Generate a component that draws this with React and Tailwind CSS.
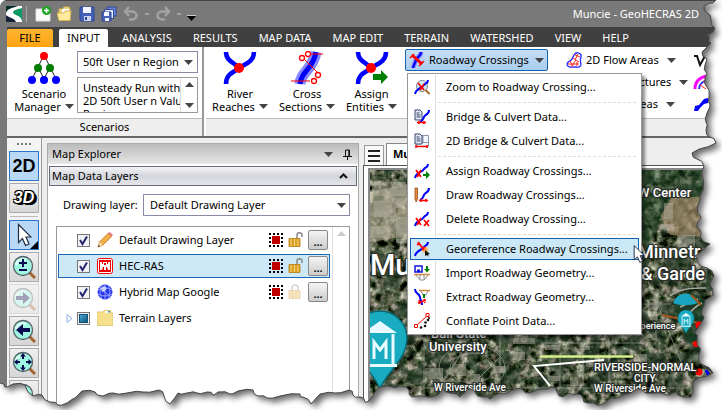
import React, { useState } from 'react'

const tabs = ['ANALYSIS', 'RESULTS', 'MAP DATA', 'MAP EDIT', 'TERRAIN', 'WATERSHED', 'VIEW', 'HELP']

const Caret = ({ className = '' }) => (
  <svg className={`shrink-0 ${className}`} width="9" height="5" viewBox="0 0 9 5">
    <path d="M0 0h9L4.500 5z" fill="#444" />
  </svg>
)

const Icon = ({ children, size = 16, className = '' }) => (
  <svg className={`shrink-0 ${className}`} width={size} height={size} viewBox="0 0 16 16" fill="none">
    {children}
  </svg>
)

/* ---------- quick access icons ---------- */

const Logo = () => (
  <svg width="16" height="16" viewBox="0 0 16 16">
    <rect width="16" height="16" fill="#fff" />
    <path d="M0 0h12C6 2 1 3 0 7z" fill="#08302f" />
    <path d="M16 2v13c-1-6-9-6-9-8.500C7 4 12 3 16 2z" fill="#0b9a62" />
    <path d="M0 9c2 2.500 9 3 10 7H0z" fill="#1a2438" />
  </svg>
)

const NewIcon = () => (
  <Icon>
    <path d="M1 3h10l4 4v8H1z" fill="#fafafa" stroke="#ddd" />
    <circle cx="11.500" cy="4.500" r="4.500" fill="#1fa51f" />
    <path d="M11.500 2v5M9 4.500h5" stroke="#fff" strokeWidth="1.500" />
  </Icon>
)

const OpenIcon = () => (
  <Icon>
    <path d="M2 14V3h4l1-2h5l1 2v11z" fill="#f0d480" stroke="#d9b54c" />
    <path d="M5 3h7v4H5z" fill="#fff" />
    <path d="M0 7h7l1-2h6l-1 9.500H2z" fill="#ffeaa0" stroke="#dbb550" />
  </Icon>
)

const SaveIcon = () => (
  <Icon>
    <path d="M1 1h14v14H2l-1-1z" fill="#4560b8" stroke="#2e4795" />
    <path d="M4 1h8v6H4z" fill="#f4f6ff" />
    <path d="M5 10h7v5H5z" fill="#cfd8f0" />
    <path d="M6 11h2v3H6z" fill="#2e4795" />
  </Icon>
)

const SaveAllIcon = () => (
  <Icon>
    <path d="M6 1h9v9H6z" fill="#6a86d8" stroke="#2e4795" />
    <path d="M3.500 3.500h9v9h-9z" fill="#e4eaff" stroke="#2e4795" />
    <path d="M1 6h9v9H1z" fill="#4560b8" stroke="#2e4795" />
    <path d="M3 6h5v4H3zM4 12h4v3H4z" fill="#f4f6ff" />
  </Icon>
)

const UndoIcon = ({ flip }) => (
  <Icon className={flip ? '-scale-x-100' : ''}>
    <path d="M6 1L2 5.500l4 4.500M2.500 5.500H9c6 0 6 8 0 8H6" stroke="#a3a3a3" strokeWidth="2.400" />
  </Icon>
)

/* ---------- ribbon icons ---------- */

const ScenarioIcon = () => (
  <svg width="34" height="34" viewBox="0 0 34 34">
    <path d="M17 4L5 28M17 4l12 24M11 16l6 12 6-12" stroke="#222" fill="none" />
    <circle cx="17" cy="5" r="4" fill="#f00" />
    <circle cx="11" cy="17" r="4" fill="#007d00" />
    <circle cx="23" cy="17" r="4" fill="#007d00" />
    <circle cx="5" cy="29" r="4" fill="#00f" />
    <circle cx="17" cy="29" r="4" fill="#00f" />
    <circle cx="29" cy="29" r="4" fill="#00f" />
  </svg>
)

const RiverIcon = ({ assign }) => (
  <svg width="34" height="34" viewBox="0 0 34 34" fill="none">
    <path d="M3 1c0 10 10 11 13 16C12 21 3 22 3 33M31 1c0 10-9 12-15 16" stroke="#00f" strokeWidth="4.500" />
    <circle cx="16" cy="17" r="5" fill="#f00" />
    {assign && <path d="M18 23h8v-4l7 7-7 7v-4h-8z" fill="#008000" />}
  </svg>
)

const SectionsIcon = () => (
  <svg width="34" height="34" viewBox="0 0 34 34" fill="none">
    <path d="M10 33c1-13 13-14 16-32" stroke="#88f" strokeWidth="11" />
    <path d="M10 33c1-13 13-14 16-32" stroke="#00f" strokeWidth="5" />
    <path d="M1 30h19M20 3h13M14 8l15 15" stroke="#f00" />
    <g fill="#fff" stroke="#f00" strokeWidth="1.300">
      <circle cx="12" cy="7" r="2.500" />
      <circle cx="18" cy="3" r="2.500" />
      <circle cx="28" cy="24" r="2.500" />
      <circle cx="24" cy="30" r="2.500" />
    </g>
  </svg>
)

const CrossingIcon = () => (
  <Icon>
    <path d="M12 0c0 5-4 4-5 8-1 3-2 4-3 8" stroke="#99f" strokeWidth="5" />
    <path d="M12 0c0 5-4 4-5 8-1 3-2 4-3 8" stroke="#00f" strokeWidth="2.500" />
    <path d="M3 3l10 9" stroke="#f00" strokeWidth="3" />
    <path d="M1 6l4-4M10 14l5-5" stroke="#f00" strokeWidth="1.500" />
  </Icon>
)

const FlowIcon = () => (
  <Icon>
    <path d="M8 3c2-4 8-2 7 2-1 3-1 4 0 7 0 4-4 3-6 3-3 0-8 1-8-3 0-3 4-2 5-5z" fill="#fff" stroke="#22f" strokeWidth="1.300" />
    <path d="M4 9l3 5M7 6l6 4M9 3l5 2M10 8l-5 7M12 2l-3 6M2 12h11M11 10v4" stroke="#f22" />
  </Icon>
)

const StructureIcon = () => (
  <Icon>
    <path d="M2 15C2 7 7 3 15 2" stroke="#f0f" strokeWidth="3" />
    <path d="M6 15c0-5 4-8 10-9" stroke="#33f" strokeWidth="2" />
    <path d="M7 11l6 4M10 7l5 4" stroke="#f22" />
  </Icon>
)

const StorageIcon = () => (
  <Icon>
    <path d="M2 10l4-1 5-6 4-1v5l-4 1-4 4-2 3H1z" fill="#00f" />
  </Icon>
)

/* ---------- crossing menu icons ---------- */

const River = ({ d = 'M1 15c1-6 8-6 9-9 1-2 4-1 4-5' }) => <path d={d} stroke="#00f" strokeWidth="2" />
const RedCross = ({ d = 'M2 8l6 7M8 8l-6 7' }) => <path d={d} stroke="#f00" strokeWidth="1.800" />
const Bars = () => (
  <>
    <path d="M1 1h5l2 2v8H1z" fill="#e8ecf6" stroke="#35446e" />
    <path d="M2.500 4h3M2.500 6h4M2.500 8h4" stroke="#35446e" />
  </>
)

const menu = [
  {
    label: 'Zoom to Roadway Crossing...',
    icon: (
      <>
        <circle cx="8" cy="7" r="5.500" fill="#c7f1ed" stroke="#889" />
        <path d="M11.500 11l4 4" stroke="#a86a2b" strokeWidth="2" />
        <River />
        <RedCross d="M4 4l6 7M10 5l-4 6" />
      </>
    )
  },
  {
    label: 'Bridge & Culvert Data...',
    gap: true,
    icon: (
      <>
        <Bars />
        <River d="M15 1c0 5-4 4-5 7-1 2-1 4-4 5" />
        <path d="M3 13.500h9M5 12v3M10 12v3" stroke="#f00" strokeWidth="1.500" />
      </>
    )
  },
  {
    label: '2D Bridge & Culvert Data...',
    icon: (
      <>
        <path d="M3 2.500h11.500v11H3zM9 2v8M3 9.500h11" fill="#f5f8fc" stroke="#8593a8" />
        <Bars />
        <path d="M2 13.500h12M2 12v3M13 12v3" stroke="#f00" strokeWidth="1.500" />
      </>
    )
  },
  {
    label: 'Assign Roadway Crossings...',
    gap: true,
    icon: (
      <>
        <River />
        <RedCross d="M2 7l5 7M7 7l-4 7" />
        <path d="M9 11h3V8l4 4-4 4v-3H9z" fill="#008000" />
      </>
    )
  },
  {
    label: 'Draw Roadway Crossings...',
    icon: (
      <>
        <path d="M1 1h2.500v11L2.200 15 1 12z" fill="#e58a3b" stroke="#9a4d16" strokeWidth=".8" />
        <River d="M15 1c0 5-4 4-5 7-1 2-1 4-4 5" />
        <path d="M5 13.500h9M7 12v3M12 12v3" stroke="#f00" strokeWidth="1.500" />
      </>
    )
  },
  {
    label: 'Delete Roadway Crossing...',
    icon: (
      <>
        <River />
        <RedCross d="M2 7l5 7M7 7l-4 7" />
        <RedCross d="M10 9l5 6M15 9l-5 6" />
      </>
    )
  },
  {
    label: 'Georeference Roadway Crossings...',
    gap: true,
    active: true,
    icon: (
      <>
        <River />
        <circle cx="11" cy="9" r="3" fill="#ffad5c" />
        <RedCross d="M4 1l6 8M3 4l3-2M8 8l3-2" />
        <path d="M11 9l5 4-2 .5L15 16l-2-2-2 1z" fill="#111" />
      </>
    )
  },
  {
    label: 'Import Roadway Geometry...',
    icon: (
      <>
        <path d="M1 1h7v6H1z" fill="#fff" stroke="#11d" strokeWidth="1.500" />
        <path d="M3 4.500h3V7H3z" fill="#11d" />
        <path d="M12 1h2v3h2l-3 3.500L10 4h2z" fill="#008000" />
        <path d="M0 9.500h16" stroke="#d08a3d" strokeWidth="1.500" />
        <path d="M2 10l4 5h4l4-5M6 10v4M10 10v4" stroke="#888" />
      </>
    )
  },
  {
    label: 'Extract Roadway Geometry...',
    icon: (
      <>
        <path d="M5 1.500h11" stroke="#d08a3d" strokeWidth="1.500" />
        <path d="M7 2l2 4h3l2-4" stroke="#888" />
        <River d="M1 0c0 5 4 4 5 8 0 3 2 4 2 8" />
        <path d="M10 5v4" stroke="#008000" strokeWidth="2" />
        <path d="M4 14l8-3M5 11l1 4M10 10l1 4" stroke="#f00" strokeWidth="1.500" />
      </>
    )
  },
  {
    label: 'Conflate Point Data...',
    icon: (
      <>
        <path d="M2 13L14 2" stroke="#f00" />
        <path d="M.5 11.500h3v3h-3zM12 .5h3v3h-3z" fill="#fff" stroke="#f00" />
        <g fill="#111">
          <circle cx="7" cy="14.500" r="1.300" />
          <circle cx="11" cy="13" r="1.300" />
          <circle cx="11.500" cy="9.500" r="1.300" />
          <circle cx="14" cy="7" r="1.300" />
          <circle cx="15" cy="5" r="1" />
        </g>
      </>
    )
  }
]

/* ---------- side toolbar ---------- */

const Magnifier = ({ children }) => (
  <svg width="24" height="24" viewBox="0 0 24 24" fill="none">
    <path d="M17 17l6 6" stroke="#a5622b" strokeWidth="3" />
    <circle cx="11" cy="11" r="9.500" fill="#9ff7e2" stroke="#555f66" strokeWidth="1.300" />
    <path d="M4 10a7 7 0 0110-5" stroke="#dffff8" strokeWidth="2" />
    {children}
  </svg>
)

const Pointer = ({ className = '' }) => (
  <svg className={className} width="15" height="24" viewBox="0 0 15 24">
    <path d="M1.500 1.500v18l4-4 3 7 3.500-1.500-3-7h5z" fill="#fff" stroke="#1f2a44" strokeWidth="1.200" />
  </svg>
)

const tools = [
  { name: '2D view', active: true, art: <span className="font-['Liberation_Sans'] text-lg font-bold">2D</span> },
  {
    name: '3D view',
    art: (
      <span className="font-['Liberation_Sans'] text-base font-bold italic text-white [text-shadow:-1px_-1px_0_#000,1px_-1px_0_#000,-1px_1px_0_#000,1px_1px_0_#000,2px_2px_0_#000,3px_2px_0_#000]">3D</span>
    )
  },
  { name: 'Select', active: true, divider: true, corner: true, art: <Pointer /> },
  { name: 'Zoom in or out', art: <Magnifier><path d="M11 4v8M7 8h8M7 15h8" stroke="#0a0a50" strokeWidth="2" /></Magnifier> },
  { name: 'Next view', disabled: true, art: <Magnifier><path d="M4 9h7V5l7 6-7 6v-4H4z" fill="#0a0a50" /></Magnifier> },
  { name: 'Previous view', art: <Magnifier><path d="M18 9h-7V5l-7 6 7 6v-4h7z" fill="#0a0a50" /></Magnifier> },
  {
    name: 'Zoom extents',
    art: (
      <Magnifier>
        <path d="M11 2l3 3.500H8zM11 20l3-3.500H8zM2 11l3.500-3v6zM20 11l-3.500-3v6z" fill="#0a0a50" />
        <path d="M11 4v4M11 14v4M4 11h4M14 11h4" stroke="#0a0a50" strokeWidth="2" />
      </Magnifier>
    )
  },
  { name: 'Pan', art: <Magnifier /> }
]

const ToolBar = () => (
  <div className="flex w-[35px] shrink-0 flex-col items-center gap-0.5 border-r border-[#999] bg-[#f4f4f4] pt-1">
    <div className="flex h-[7px] gap-[2px] pt-px">
      {[0, 1, 2, 3].map(i => <span key={i} className="size-[2px] bg-[#777]" />)}
    </div>
    {tools.map(tool => (
      <React.Fragment key={tool.name}>
        {tool.divider && <div className="my-px h-px w-7 bg-[#bbb]" />}
        <button
          type="button"
          aria-label={tool.name}
          disabled={tool.disabled}
          className={`relative flex size-[30px] shrink-0 items-center justify-center border ${
            tool.active ? 'border-[#2a74c9] bg-[#b9d8f5]' : 'border-[#aaa] bg-linear-to-b from-[#efefef] to-[#d6d6d6]'
          } ${tool.disabled ? 'opacity-35' : ''}`}
        >
          {tool.art}
          {tool.corner && <span className="absolute right-0 bottom-0 border-4 border-transparent border-r-black border-b-black" />}
        </button>
      </React.Fragment>
    ))}
  </div>
)

/* ---------- layer tree ---------- */

const layers = [
  {
    name: 'Default Drawing Layer',
    lock: 'open',
    icon: (
      <>
        <path d="M1 15l1.500-5L11 1.500l3.500 3L6 13z" fill="#f5b04e" stroke="#c98427" />
        <path d="M11 1l1.500-1L16 3l-1.500 1.500z" fill="#e8747a" />
        <path d="M1 15l1.500-5L6 13z" fill="#f3d9ae" />
        <path d="M1 15l.7-2 1.500 1.300z" fill="#222" />
      </>
    )
  },
  {
    name: 'HEC-RAS',
    lock: 'open',
    selected: true,
    icon: (
      <>
        <rect x=".5" y=".5" width="15" height="15" rx="2" fill="#fff" stroke="#f00" />
        <rect x="2" y="2" width="12" height="12" fill="#e00" />
        <path d="M3 4h2v2h1V4h4v2h1V4h2v8h-2l-1-3H9v3H7V9H6l-1 3H3z" fill="#fff" />
        <path d="M7 5h2v2H7z" fill="#e00" />
      </>
    )
  },
  {
    name: 'Hybrid Map Google',
    lock: 'closed',
    icon: (
      <>
        <circle cx="8" cy="8" r="7.500" fill="#2a35ee" />
        <path d="M1 6q7-4 14 0M1 10q7 4 14 0M8 0v16M5 1q-4 7 0 14M11 1q4 7 0 14M2 3l12 10" stroke="#a9b4ff" strokeWidth=".8" />
        <path d="M4 4l3-2 3 2-2 3-3 1z" fill="#c7d0ff" />
      </>
    )
  }
]

const Padlock = ({ open }) => (
  <Icon className={open ? '' : 'opacity-35'}>
    {open ? <path d="M9 8V3c0-3 5-3 5 0v2" stroke="#888" strokeWidth="1.500" /> : <path d="M4 8V4c0-4 6-4 6 0v4" stroke="#888" strokeWidth="1.500" />}
    <path d="M1 6.500h11v8H1z" fill="#dba126" stroke="#b67a10" strokeWidth=".8" />
    <path d="M3 7v7M6.500 7v7M10 7v7" stroke="#f6d77c" />
  </Icon>
)

const LayerRow = ({ layer }) => {
  const [checked, setChecked] = useState(true)
  return (
    <li className={`flex h-6 items-center border pl-[18px] ${layer.selected ? 'border-[#1c66b8] bg-[#cde9f7]' : 'border-transparent'}`}>
      <label className="flex min-w-0 flex-1 items-center">
        <input type="checkbox" checked={checked} onChange={() => setChecked(!checked)} className="peer size-[13px] appearance-none border border-[#777] bg-[#f0f2f6]" />
        <svg className="invisible -ml-[13px] size-[13px] peer-checked:visible" viewBox="0 0 13 13" fill="none">
          <path d="M3 6l2.500 4L10 2.500" stroke="#26266e" strokeWidth="2" />
        </svg>
        <Icon className="mr-1.5 ml-[7px]">{layer.icon}</Icon>
        <span className="truncate">{layer.name}</span>
      </label>
      <span className="flex size-[14px] items-center justify-center border-2 border-dotted border-black">
        <span className="size-2 shrink-0 bg-[#c00000]" />
      </span>
      <span className="mr-1 ml-[5px]"><Padlock open={layer.lock === 'open'} /></span>
      <button type="button" aria-label={`${layer.name} options`} className="mr-px flex h-5 w-5 items-center justify-center rounded-[2px] border border-[#888] bg-linear-to-b from-[#f4f4f4] to-[#ccc] pt-1 font-semibold leading-3">
        ...
      </button>
    </li>
  )
}

const MapExplorer = () => (
  <section className="ml-[5px] flex w-[312px] shrink-0 flex-col border border-[#aaa] bg-white">
    <header className="flex h-5 items-center bg-linear-to-b from-[#bcbcbc] to-[#e6e6e6] pr-1.5 pl-1">
      <h2 className="flex-1">Map Explorer</h2>
      <Caret />
      <svg className="ml-2.5" width="9" height="11" viewBox="0 0 9 11" fill="none">
        <path d="M2.500 7V1h4v6M5.800 1v6M0 7.500h9M4.500 8v3" stroke="#111" />
      </svg>
    </header>
    <div className="mx-px mt-0.5 flex h-5 items-center border border-[#666b78] bg-linear-to-b from-[#f4f4f6] via-[#d4d6dc] to-[#e4e5ea] pr-2 pl-0.5">
      <h3 className="flex-1">Map Data Layers</h3>
      <svg width="9" height="6" viewBox="0 0 9 6" fill="none"><path d="M1 5l3.500-3.500L8 5" stroke="#111" strokeWidth="2" /></svg>
    </div>
    <div className="mt-2 mr-2 ml-[15px] flex h-[22px] items-center">
      <label htmlFor="drawing-layer" className="w-20">Drawing layer:</label>
      <div className="relative flex flex-1 items-center">
        <select id="drawing-layer" className="h-[22px] w-full appearance-none border border-[#8a8aa8] bg-white pl-1.5">
          <option>Default Drawing Layer</option>
        </select>
        <Caret className="pointer-events-none absolute right-1" />
      </div>
    </div>
    <div className="mx-2 mt-2.5 flex flex-1 border border-b-0 border-[#999]">
      <ul className="flex flex-1 flex-col gap-0.5 py-px pr-0.5 pl-px">
        {layers.map(layer => <LayerRow key={layer.name} layer={layer} />)}
        <li className="flex h-6 items-center pl-2">
          <svg width="7" height="9" viewBox="0 0 7 9"><path d="M1 .5v8l5-4z" fill="#fff" stroke="#8aaedf" /></svg>
          <span className="ml-1 flex size-[13px] items-center justify-center border border-[#777] bg-[#eee]">
            <span className="size-[9px] border border-[#135078] bg-linear-to-br from-[#48a9d8] to-[#14557c]" />
          </span>
          <Icon className="mr-1.5 ml-[7px]">
            <path d="M0 2h6l1-1.500h7V3h2v12.500H0z" fill="#f7e08c" stroke="#dcc06a" strokeWidth=".8" />
            <path d="M8 1h5v2H8z" fill="#fff" />
            <path d="M11 1h2v1.500h-2z" fill="#3b8fcf" />
          </Icon>
          <span>Terrain Layers</span>
        </li>
      </ul>
      <div className="flex w-[17px] justify-center border-l border-[#ddd] pt-1">
        <svg width="9" height="5" viewBox="0 0 9 5"><path d="M0 5h9L4.500 0z" fill="#ccc" /></svg>
      </div>
    </div>
  </section>
)

/* ---------- aerial map ---------- */

const buildings = [
  [372, 180, 34, 14], [374, 199, 22, 16], [396, 215, 18, 26], [370, 224, 20, 12], [392, 196, 12, 10],
  [664, 201, 9, 16], [677, 233, 18, 12], [660, 222, 14, 6], [425, 366, 18, 11], [452, 362, 14, 12],
  [470, 372, 10, 8], [494, 364, 12, 7], [513, 336, 22, 6], [513, 350, 12, 8], [545, 343, 15, 5],
  [580, 344, 10, 4], [637, 352, 10, 14], [548, 374, 12, 5], [570, 376, 8, 8], [586, 360, 10, 5],
  [648, 300, 10, 8], [650, 312, 8, 6], [436, 380, 12, 5]
]

const Pin = ({ x, y, s }) => (
  <g transform={`translate(${x} ${y}) scale(${s})`}>
    <path d="M0 41C-6 24-27 12-27-10a27 27 0 0154 0C27 12 6 24 0 41z" fill="#19abc0" stroke="#0b6673" strokeWidth="1.500" />
    <path d="M-17-15L0-27l17 12zM-17 16h34v3h-34z" fill="#e8fbff" />
    <path d="M-13-14v30M13-14v30M-6 11V-6l6 8 6-8v17" fill="none" stroke="#e8fbff" strokeWidth="3" />
  </g>
)

const AerialMap = () => (
  <svg className="absolute inset-0 size-full" viewBox="370 168 352 242" preserveAspectRatio="xMinYMin slice">
    <defs>
      <filter id="ground" x="0" y="0" width="100%" height="100%" colorInterpolationFilters="sRGB">
        <feTurbulence type="fractalNoise" baseFrequency=".13" numOctaves="5" seed="8" />
        <feColorMatrix values="1.500 .5 0 0 -.66  1.300 .6 0 0 -.58  1.400 .5 0 0 -.67  0 0 0 0 1" />
      </filter>
      <filter id="trees" x="0" y="0" width="100%" height="100%" colorInterpolationFilters="sRGB">
        <feTurbulence type="fractalNoise" baseFrequency=".06" numOctaves="5" seed="21" />
        <feColorMatrix values="0 0 0 0 .13  0 0 0 0 .22  0 0 0 0 .15  0 12 0 0 -6" />
      </filter>
    </defs>
    <rect x="370" y="168" width="352" height="242" filter="url(#ground)" />
    <rect x="370" y="168" width="352" height="242" filter="url(#trees)" opacity=".6" />
    <path d="M641 168h70v24l-45 10-10 30-15 30z" fill="#1f4425" opacity=".5" />
    <path d="M672 195h34v40l-36-2-9-20z" fill="#a08a68" opacity=".7" />
    <path d="M370 190l37-8v52l-37 6z" fill="#cfc4aa" opacity=".5" />
    <path d="M672 300q16-16 34-2v60l-20-22z" fill="#173b23" opacity=".8" />
    <g fill="#b9b3a6" opacity=".45">
      {buildings.map(([x, y, w, h], i) => <rect key={i} x={x} y={y} width={w} height={h} />)}
    </g>
    <g stroke="#9a9c96" fill="none" opacity=".7">
      <path d="M370 189h40M424 335v70M424 386h290M500 335v52M609 335v52M656 300v50M641 302h30M540 341h116M560 354v32M641 262l50 122M583 354v30M665 384l20 25M460 335v20M440 385l25-40M470 385l30-30" />
      <ellipse cx="472" cy="366" rx="22" ry="15" />
      <ellipse cx="472" cy="366" rx="33" ry="23" />
    </g>
    <path d="M670 294q10-9 36-8M690 325q-7-14 12-24M680 305l18-8" stroke="#a9aaa2" strokeWidth="1.500" fill="none" />
    <path d="M673 301a13 13 0 0125 0c-9 3-17 3-25 0z" fill="#19a5c2" />
    <path d="M540 354.500h93" stroke="#d5f28e" strokeWidth="2.500" />
    <path d="M604 358l-70 6 16 20" stroke="#fff" strokeWidth="2" fill="none" />
    <path d="M662 313l36 8M691 293l10 10M692 341l6 1" stroke="#a3561c" strokeWidth="2" />
    <g fill="#f00">
      <circle cx="699" cy="323" r="3.500" />
      <circle cx="696" cy="342" r="3" />
      <circle cx="699" cy="370" r="3.500" />
    </g>
    <path d="M706 368l4 8" stroke="#00f" strokeWidth="3" />
    <Pin x="380" y="346" s="1" />
    <Pin x="686" y="319" s=".3" />
    <g className="fill-white font-['Roboto'] font-medium" stroke="#2a2f2a" strokeWidth="2.500" strokeLinejoin="round" paintOrder="stroke">
      <text x="370" y="273" fontSize="29">Muncie</text>
      <text x="638" y="195" fontSize="13">W Center</text>
      <text x="638" y="256" fontSize="18">Minnetr</text>
      <text x="641" y="278" fontSize="18">&amp; Garde</text>
      <text x="431" y="336" fontSize="13">Ball State</text>
      <text x="429" y="349" fontSize="13">University</text>
      <text x="434" y="389" fontSize="10">W Riverside Ave</text>
      <text x="631" y="327" fontSize="9">Experience</text>
      <text x="594" y="369" fontSize="11">RIVERSIDE-NORMAL</text>
      <text x="634" y="380" fontSize="10">CITY</text>
      <text x="594" y="390" fontSize="10">W Riverside Ave</text>
    </g>
  </svg>
)

/* ---------- torn paper edge ---------- */

const tear = [
  [716, 0], [713, 3], [704, 6], [707, 13], [711, 20], [714, 27], [713, 32], [706, 35], [709, 39], [711, 43], [702, 52],
  [706, 58], [705, 65], [706, 72], [705, 78], [707, 87], [709, 97], [710, 104], [707, 113], [706, 122], [706, 130],
  [710, 137], [716, 143], [703, 148], [692, 153], [697, 159], [704, 166], [702, 175], [703, 190], [700, 198],
  [697, 207], [701, 217], [697, 223], [700, 230], [700, 237], [710, 244], [703, 250], [695, 256], [697, 262],
  [707, 268], [714, 276], [710, 285], [713, 295], [705, 300], [702, 310], [704, 317], [700, 325], [695, 333],
  [697, 340], [700, 348], [698, 357], [703, 365], [713, 373], [702, 377], [695, 380], [693, 387], [691, 397],
  [678, 395], [673, 393], [667, 395], [652, 393], [643, 391], [637, 389], [628, 394], [620, 397], [612, 398],
  [605, 403], [597, 405], [587, 403], [583, 398], [577, 394], [570, 393], [563, 397], [557, 392], [552, 387],
  [542, 389], [530, 393], [523, 390], [515, 389], [503, 394], [495, 395], [490, 399], [482, 397], [475, 392],
  [468, 389], [460, 397], [450, 393], [443, 388], [438, 395], [428, 397], [412, 397], [409, 390], [400, 386],
  [392, 387], [380, 387], [375, 392], [370, 400], [365, 402], [360, 397], [353, 395], [349, 390], [335, 393],
  [320, 394], [311, 404], [303, 397], [300, 394], [280, 396], [267, 398], [258, 396], [253, 390], [238, 391],
  [230, 394], [218, 392], [213, 395], [207, 392], [197, 393], [187, 393], [178, 393], [170, 404], [164, 396],
  [159, 390], [143, 392], [127, 393], [113, 393], [103, 396], [95, 392], [82, 391], [75, 398], [67, 403],
  [58, 405], [50, 402], [42, 395], [33, 396], [25, 385], [13, 384], [5, 387], [0, 383]
]

// put a small notch between every two points so the tear looks ragged
const ragged = tear
  .flatMap(([x, y], i) => {
    const next = tear[i + 1]
    if (!next) return [[x, y]]
    const bump = i % 2 ? 1.200 : -1.200
    return [[x, y], [(x + next[0]) / 2 + bump, (y + next[1]) / 2 - bump]]
  })
  .map(p => p.join(' '))
  .join('L')

const inside = `M0 0L${ragged}z`
const outside = `M-9 -9H740V430H-9zM0 -9L${ragged}L-9 383V-9z`

const TornEdge = () => (
  <svg className="pointer-events-none absolute inset-0 z-30 size-full" viewBox="0 0 722 410" preserveAspectRatio="none">
    <defs>
      <clipPath id="outside"><path d={outside} clipRule="evenodd" /></clipPath>
      <filter id="soft"><feGaussianBlur stdDeviation="3" /></filter>
    </defs>
    <g clipPath="url(#outside)">
      <path d="M-9 -9H740V430H-9z" fill="#fff" />
      <path d={inside} transform="translate(4 4)" fill="#000" opacity=".6" filter="url(#soft)" />
    </g>
    <path d={`M${ragged}`} fill="none" stroke="#444" />
    <path d="M0 0h6Q1 1 0 6z" fill="#fff" />
  </svg>
)

/* ---------- ribbon ---------- */

const BigButton = ({ icon, lines, className }) => (
  <button type="button" className={`flex flex-col items-center leading-[13px] ${className}`}>
    {icon}
    <span className="mt-0.5">{lines[0]}</span>
    <span className="flex items-center gap-1 whitespace-nowrap">{lines[1]}<Caret /></span>
  </button>
)

const CrossingsMenu = () => (
  <div role="menu" className="absolute top-[26px] left-0.5 z-20 w-[235px] border border-[#999] bg-white p-px shadow-[3px_3px_3px_rgba(0,0,0,0.45)]">
    {menu.map(item => (
      <React.Fragment key={item.label}>
        {item.gap && (
          <div className="flex h-1.5 items-center">
            <div className="h-full w-[27px] border-r border-[#ddd]" />
            <div className="mr-1 ml-0.5 flex-1 border-t border-dashed border-[#ddd]" />
          </div>
        )}
        <button type="button" role="menuitem" className="relative flex h-6 w-full items-center text-left">
          {item.active && <span className="absolute inset-px border border-[#1560b0] bg-[#cbe8f6]" />}
          <span className={`flex h-full w-[27px] shrink-0 items-center pl-[5px] ${item.active ? '' : 'border-r border-[#ddd]'}`}>
            <Icon className="relative">{item.icon}</Icon>
          </span>
          <span className="relative pl-2.5 whitespace-nowrap">{item.label}</span>
        </button>
      </React.Fragment>
    ))}
    <Pointer className="absolute top-[170px] -right-1 h-5 w-3" />
  </div>
)

const Ribbon = () => {
  const [open, setOpen] = useState(true)
  return (
    <div className="flex border-b-2 border-[#666] bg-white">
      <section className="flex w-[197px] shrink-0 flex-col border-r-2 border-[#999]">
        <div className="flex h-[71px] pt-1">
          <BigButton className="w-[70px] shrink-0 pl-1" icon={<ScenarioIcon />} lines={['Scenario', 'Manager']} />
          <div className="flex min-w-0 flex-1 flex-col gap-1 pr-1">
            <div className="relative flex items-center">
              <select aria-label="Scenario" className="h-[22px] w-full min-w-0 appearance-none border border-[#8a8aa8] bg-white pl-[5px]">
                <option>50ft User n Region</option>
              </select>
              <Caret className="pointer-events-none absolute right-[5px]" />
            </div>
            <div className="flex h-9 border border-[#999]">
              <textarea
                aria-label="Scenario description"
                className="w-0 min-w-0 flex-1 resize-none overflow-hidden pt-[3px] pl-[5px] leading-[13px] whitespace-pre"
                defaultValue={'Unsteady Run with\n2D 50ft User n Value\nRegion'}
              />
              <div className="flex w-[17px] shrink-0 flex-col items-center justify-between border-l border-[#ddd] py-1">
                <Caret className="rotate-180" />
                <Caret />
              </div>
            </div>
          </div>
        </div>
        <h2 className="h-[18px] border-t border-[#bbb] bg-[#eee] text-center leading-4">Scenarios</h2>
      </section>
      <section className="flex min-w-0 flex-1 flex-col">
        <div className="flex h-[71px]">
          <BigButton className="w-[72px] shrink-0 pt-1" icon={<RiverIcon />} lines={['River', 'Reaches']} />
          <BigButton className="w-[62px] shrink-0 pt-1" icon={<SectionsIcon />} lines={['Cross', 'Sections']} />
          <BigButton className="w-[67px] shrink-0 pt-1" icon={<RiverIcon assign />} lines={['Assign', 'Entities']} />
          <div className="relative pt-0.5">
            <button
              type="button"
              aria-expanded={open}
              onClick={() => setOpen(!open)}
              className="flex h-[22px] w-[143px] items-center rounded-[2px] border border-[#1560b0] bg-linear-to-b from-[#c4def5] to-[#a9cdee] pl-[3px]"
            >
              <CrossingIcon />
              <span className="flex-1 pl-1 text-left whitespace-nowrap">Roadway Crossings</span>
              <Caret className="mr-[3px]" />
            </button>
            {open && <CrossingsMenu />}
          </div>
          <div className="ml-[18px] flex w-[127px] shrink-0 flex-col pt-0.5">
            <button type="button" className="flex h-[22px] items-center gap-1 whitespace-nowrap">
              <FlowIcon />2D Flow Areas<Caret className="ml-1" />
            </button>
            <button type="button" className="flex h-[22px] items-center gap-1 whitespace-nowrap">
              <StructureIcon />Inline Structures<Caret className="ml-1" />
            </button>
            <button type="button" className="flex h-[22px] items-center gap-1 whitespace-nowrap">
              <StorageIcon />Storage Areas<Caret className="ml-1" />
            </button>
          </div>
          <div className="flex flex-col gap-1.5 pt-[5px]">
            <Icon><path d="M1 4h3l3 9 5-9h4" stroke="#111" strokeWidth="2" /></Icon>
            <StructureIcon />
            <StorageIcon />
          </div>
        </div>
        <div className="ml-0.5 h-[18px] border-t border-[#bbb] bg-[#eee]" />
      </section>
    </div>
  )
}

const TitleBar = () => (
  <header className="flex h-[27px] shrink-0 items-center border-t border-[#444] bg-[#797979] pl-1.5 text-white">
    <Logo />
    <span className="mr-2 ml-1 h-4 w-px bg-[#aaa]" />
    <div className="flex items-center gap-1.5">
      <button type="button" aria-label="New"><NewIcon /></button>
      <button type="button" aria-label="Open"><OpenIcon /></button>
      <button type="button" aria-label="Save"><SaveIcon /></button>
      <button type="button" aria-label="Save all"><SaveAllIcon /></button>
      <button type="button" aria-label="Undo" className="flex items-center gap-1.5">
        <UndoIcon /><span className="h-0.5 w-1 bg-[#a3a3a3]" />
      </button>
      <button type="button" aria-label="Redo" className="flex items-center gap-1.5">
        <UndoIcon flip /><span className="h-0.5 w-1 bg-[#a3a3a3]" />
      </button>
      <button type="button" aria-label="Customize" className="pt-2">
        <svg width="9" height="7" viewBox="0 0 9 7"><path d="M0 1h9L4.500 6z" fill="#000" /><path d="M0 .5h9" stroke="#ccc" /></svg>
      </button>
    </div>
    <h1 className="ml-auto pr-[23px]">Muncie - GeoHECRAS 2D</h1>
  </header>
)

const App = () => (
  <div className="relative flex h-screen w-full flex-col overflow-hidden bg-[#797979] font-['Noto_Sans',sans-serif] text-[11px] text-black">
    <TitleBar />
    <nav className="ml-[7px] flex h-5 shrink-0 items-end bg-[#404040] text-white">
      <button type="button" className="h-[18px] w-[46px] rounded-t-[2px] bg-linear-to-b from-[#ffb52e] to-[#ffa30f] text-black">FILE</button>
      <button type="button" className="mr-3.5 ml-1.5 h-[18px] w-[49px] rounded-t-[2px] bg-white text-black">INPUT</button>
      <div className="flex h-[18px] gap-[21px]">
        {tabs.map(tab => <button key={tab} type="button" className="whitespace-nowrap">{tab}</button>)}
      </div>
    </nav>
    <div className="ml-[7px] flex min-h-0 flex-1 flex-col bg-[#eee]">
      <Ribbon />
      <main className="flex min-h-0 flex-1">
        <ToolBar />
        <div className="flex min-w-0 flex-1 pt-[5px]">
          <MapExplorer />
          <section className="ml-1 flex min-w-0 flex-1 flex-col">
            <div className="flex h-[22px] shrink-0 items-end">
              <button type="button" aria-label="Documents" className="mr-0.5 ml-px flex h-5 w-5 flex-col items-center justify-center gap-[3px] border border-b-0 border-[#999] bg-[#f8f8f8]">
                <span className="h-0.5 w-3 bg-[#222]" />
                <span className="h-0.5 w-3 bg-[#222]" />
                <span className="h-0.5 w-3 bg-[#222]" />
              </button>
              <button type="button" className="h-[22px] border border-b-0 border-[#888] bg-white px-1.5 font-bold">Muncie</button>
            </div>
            <div className="flex flex-1 border-t border-l border-[#555] bg-white pt-0.5 pl-1">
              <div className="relative flex-1 overflow-hidden border-t-2 border-l-2 border-[#888]">
                <AerialMap />
              </div>
            </div>
          </section>
        </div>
      </main>
    </div>
    <TornEdge />
  </div>
)

export default App
